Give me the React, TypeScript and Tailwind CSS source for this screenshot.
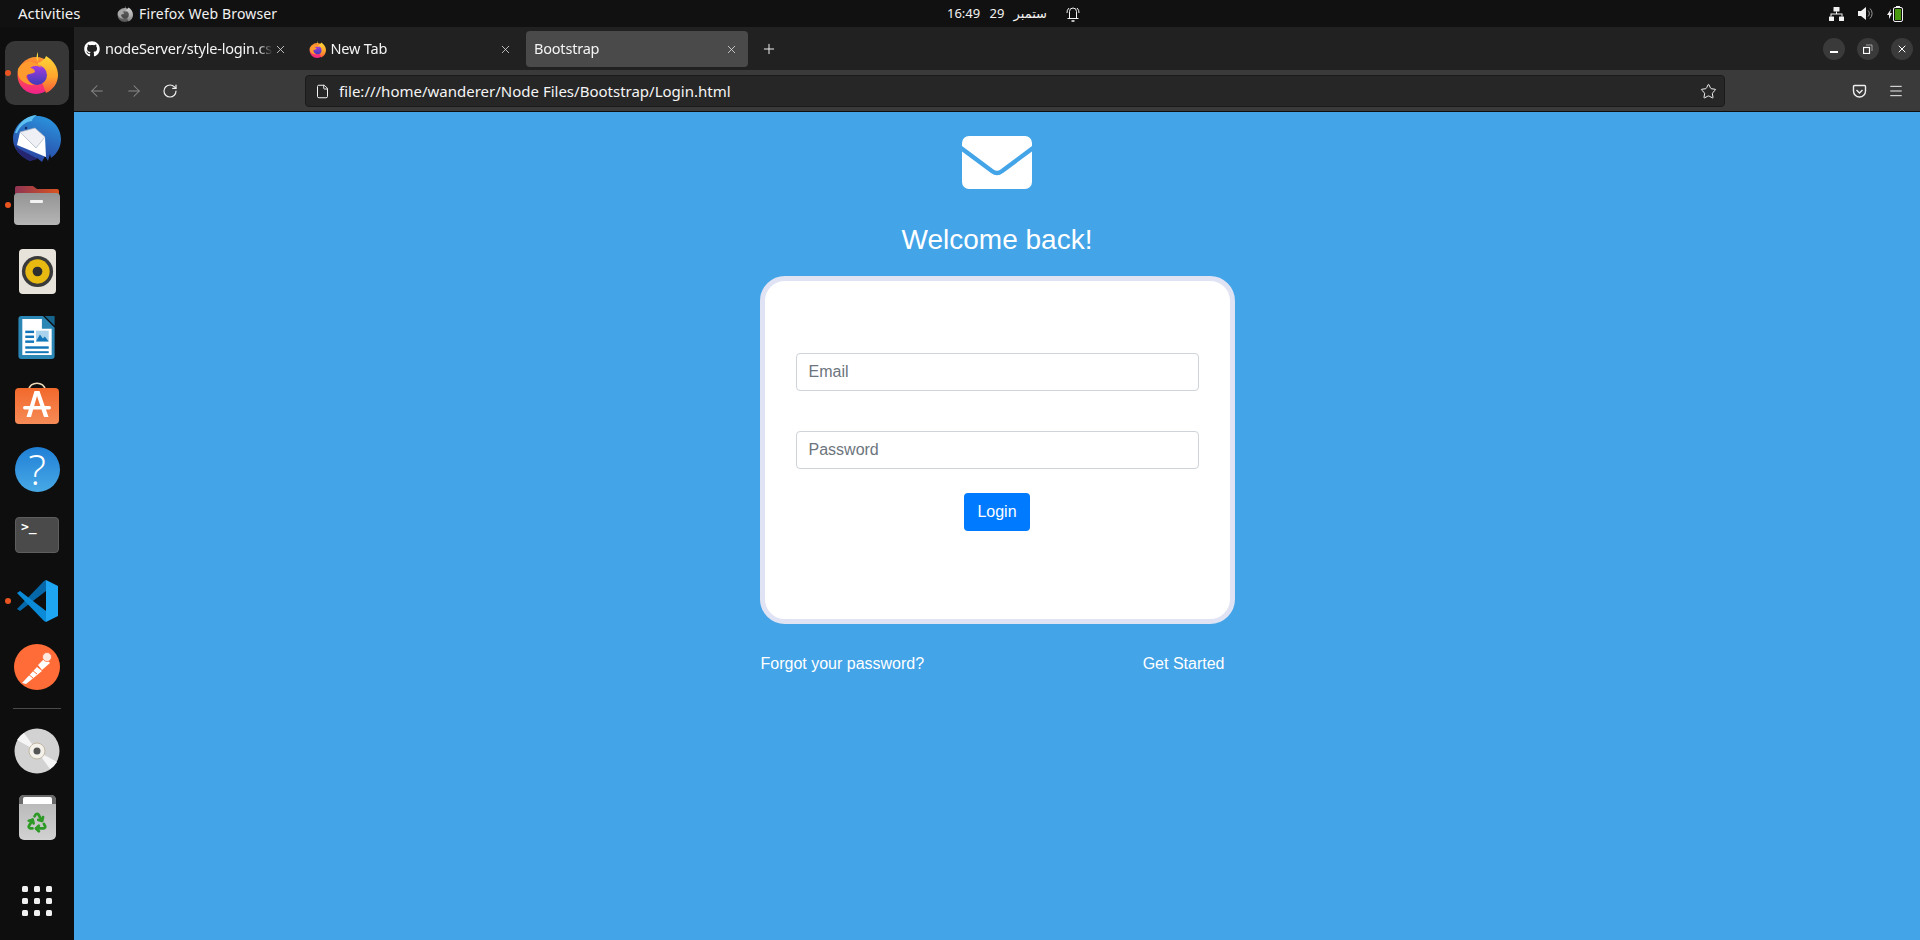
import { ArrowLeft, ArrowRight, RotateCw, File, Star, Menu, X, Plus, Recycle } from "lucide-react";
import { FaGithub } from "react-icons/fa";

const uiFont = "font-['Noto_Sans','DejaVu_Sans',sans-serif]";

function FirefoxIcon({ size = 42 }: { size?: number }) {
  return (
    <svg width={size} height={size} viewBox="0 0 42 42">
      <defs>
        <linearGradient id="ffOuter" x1="0.5" y1="0" x2="0.5" y2="1">
          <stop offset="0" stopColor="#ff9a2e" />
          <stop offset="0.55" stopColor="#ff4f4a" />
          <stop offset="1" stopColor="#f0208f" />
        </linearGradient>
        <linearGradient id="ffFlame" x1="0.5" y1="0" x2="0.5" y2="1">
          <stop offset="0" stopColor="#ffe03c" />
          <stop offset="0.6" stopColor="#ffa52c" />
          <stop offset="1" stopColor="#ff5a3c" />
        </linearGradient>
        <linearGradient id="ffGlobe" x1="0.5" y1="0" x2="0.5" y2="1">
          <stop offset="0" stopColor="#a83be0" />
          <stop offset="1" stopColor="#3d3bb8" />
        </linearGradient>
      </defs>
      <circle cx="20" cy="23.500" r="18.500" fill="url(#ffOuter)" />
      <path d="M22 0c-2 4-2 8 1 11 2-2 6-3 7-7 7 4 12 11 12 19 0 8-5 15-12 18l-8-22z" fill="url(#ffFlame)" />
      <circle cx="21" cy="23" r="10" fill="url(#ffGlobe)" />
      <path
        d="M2 17c3-6 9-8 14-7 5 1 8 3 10 6-5-3-10-2-12 0 3 0 5 2 5 4-5 3-8 1-9 5 2 4 4 6 8 8-9 0-18-6-16-16z"
        fill="#ff9a2e"
      />
    </svg>
  );
}

function ThunderbirdIcon() {
  return (
    <svg width="48" height="48" viewBox="0 0 48 48">
      <defs>
        <linearGradient id="tbBlue" x1="0.7" y1="0" x2="0.3" y2="1">
          <stop offset="0" stopColor="#2a93dd" />
          <stop offset="1" stopColor="#2a3f9e" />
        </linearGradient>
      </defs>
      <path
        d="M24 1c13 0 24 10 24 23 0 8-4 15-10 19l-1-4-2 7-3-5-3 6-5-4-7 3C8 42 0 34 0 24 0 11 11 1 24 1z"
        fill="url(#tbBlue)"
      />
      <path d="M2 18C6 6 16 0 24 0c-3 2-5 4-5 6-7 1-12 5-15 12z" fill="#5dc0f0" />
      <path d="M2 30c2 8 8 13 15 16l8-2-13-7C8 35 4 33 2 30z" fill="#25266f" />
      <path d="M7 17l25 5 1 20L4 30z" fill="#ffffff" />
      <path d="M7 17l15-4 10 9-9 11z" fill="#eef0f5" stroke="#a8b2c0" strokeWidth="0.7" />
      <circle cx="13" cy="13" r="1.200" fill="#1a2a5c" />
    </svg>
  );
}

function FilesIcon() {
  return (
    <svg width="46" height="40" viewBox="0 0 46 40">
      <defs>
        <linearGradient id="flTab" x1="0" y1="0" x2="1" y2="0">
          <stop offset="0" stopColor="#8f3454" />
          <stop offset="1" stopColor="#d9551f" />
        </linearGradient>
        <linearGradient id="flBody" x1="0" y1="0" x2="0" y2="1">
          <stop offset="0" stopColor="#949494" />
          <stop offset="1" stopColor="#b5b5b5" />
        </linearGradient>
      </defs>
      <path d="M1 3a2 2 0 0 1 2-2h16l4 3h20a2 2 0 0 1 2 2v10H1z" fill="url(#flTab)" />
      <rect x="0" y="8" width="46" height="32" rx="4" fill="url(#flBody)" />
      <rect x="16" y="15" width="13" height="3" rx="1" fill="#f2f2f2" />
    </svg>
  );
}

function RhythmboxIcon() {
  return (
    <svg width="37" height="45" viewBox="0 0 38 46">
      <rect width="38" height="46" rx="4" fill="#e7e3da" />
      <circle cx="19" cy="23" r="16" fill="#3a3a3a" />
      <circle cx="19" cy="23" r="12.500" fill="#e8b911" />
      <circle cx="19" cy="23" r="5" fill="#2e2e2e" />
    </svg>
  );
}

function WriterIcon() {
  return (
    <svg width="38" height="45" viewBox="0 0 38 46">
      <path d="M3 1h22l12 12v29a3 3 0 0 1-3 3H3a3 3 0 0 1-3-3V4a3 3 0 0 1 3-3z" fill="#2a86b5" />
      <path d="M4 4h20v10h10v27H4z" fill="#ffffff" />
      <path d="M27 1l10 0 0 10z" fill="#15658f" />
      <rect x="7" y="16" width="9" height="2.500" fill="#1276b8" />
      <rect x="7" y="21" width="9" height="2.500" fill="#1276b8" />
      <rect x="7" y="26" width="9" height="2.500" fill="#1276b8" />
      <rect x="7" y="32" width="24" height="2.500" fill="#1276b8" />
      <rect x="7" y="37" width="24" height="2" fill="#1276b8" />
      <path d="M18 16h13v11H18z" fill="#a9d3ec" />
      <path d="M18 27l4-7 3 4 2-2 4 5z" fill="#1276b8" />
    </svg>
  );
}

function SoftwareIcon() {
  return (
    <svg width="44" height="42" viewBox="0 0 44 42">
      <defs>
        <linearGradient id="swBag" x1="0" y1="0" x2="0" y2="1">
          <stop offset="0" stopColor="#f2692c" />
          <stop offset="1" stopColor="#f68b57" />
        </linearGradient>
      </defs>
      <path d="M14 8c0-9 16-9 16 0" fill="none" stroke="#ecd9b8" strokeWidth="1.600" />
      <rect x="0" y="6" width="44" height="36" rx="4" fill="url(#swBag)" />
      <path d="M19.500 9h5l9 26h-4.500L22 14l-6 21h-4.500z" fill="#ffffff" />
      <rect x="8" y="24" width="28" height="3.500" rx="1.700" fill="#ffffff" />
    </svg>
  );
}

function HelpIcon() {
  return (
    <div className="flex h-[45px] w-[45px] items-center justify-center rounded-full bg-gradient-to-b from-[#1f7fd6] to-[#48a9e6] font-['Open_Sans',sans-serif] text-[42px] font-light leading-none text-white">
      ?
    </div>
  );
}

function TerminalIcon() {
  return (
    <div className="h-[36px] w-[44px] rounded-[4px] border border-[#5e5e5e] bg-[#4a4a4a] pl-[5px] pt-[1px] font-['DejaVu_Sans_Mono',monospace] text-[13px] font-bold leading-[16px] text-white">
      {">_"}
    </div>
  );
}

function VSCodeIcon() {
  return (
    <svg width="42" height="42" viewBox="0 0 42 42">
      <path d="M1 29l3 2L30 11V0l-2 1z" fill="#0668a8" />
      <path d="M1 13l3-2 26 20v11l-2-1z" fill="#0b8ad8" />
      <path d="M30 0l12 6v30l-12 6z" fill="#1fa6f3" />
    </svg>
  );
}

function PostmanIcon() {
  return (
    <svg width="46" height="46" viewBox="0 0 46 46">
      <circle cx="23" cy="23" r="23" fill="#ff6c37" />
      <path d="M8 39l15-16 5 4-16 13z" fill="#ffffff" />
      <path d="M24 21l7-7 5 5-8 7z" fill="#ffffff" />
      <path d="M14 30l5 4M18 26l5 4" stroke="#ff6c37" strokeWidth="1" />
      <circle cx="33" cy="13" r="4.500" fill="#ffe9df" stroke="#ff6c37" strokeWidth="0.8" />
    </svg>
  );
}

function DiscIcon() {
  return (
    <svg width="46" height="46" viewBox="0 0 46 46">
      <circle cx="23" cy="23" r="22.500" fill="#d2d2d2" />
      <path d="M23 23L3 12a23 23 0 0 1 7-7z" fill="#f5f5f5" />
      <path d="M23 23l20 11a23 23 0 0 1-7 7z" fill="#f5f5f5" />
      <circle cx="23" cy="23" r="8" fill="#f4f1ea" stroke="#b9ab94" strokeWidth="0.8" />
      <circle cx="23" cy="23" r="3.500" fill="#555555" />
    </svg>
  );
}

function TrashIcon() {
  return (
    <div className="relative flex h-[45px] w-[37px] flex-col items-center overflow-hidden rounded-[5px] bg-gradient-to-b from-[#b4b4b4] to-[#d2d2d2]">
      <div className="h-[9px] w-full bg-[#6a6a6a] pl-[4px] pr-[1px] pt-[2px]">
        <div className="h-[7px] w-[29px] rounded-t-[2px] bg-white" />
      </div>
      <Recycle className="mt-[7px] h-[22px] w-[22px] text-[#2e9a26]" strokeWidth={3} />
    </div>
  );
}

function AppGrid() {
  return (
    <div className="grid grid-cols-3 gap-[6px]">
      {Array.from({ length: 9 }).map((_, i) => (
        <div key={i} className="h-[6px] w-[6px] rounded-[1.5px] bg-[#f0f0f0]" />
      ))}
    </div>
  );
}

function DockItem({ children, dot, active }: { children: React.ReactNode; dot?: boolean; active?: boolean }) {
  return (
    <div className="relative flex h-[66px] w-full items-center justify-center">
      {dot && <div className="absolute left-[5px] top-[30px] h-[6px] w-[6px] rounded-full bg-[#e95420]" />}
      {active ? (
        <div className="flex h-[64px] w-[64px] items-center justify-center rounded-[10px] bg-[#373737]">{children}</div>
      ) : (
        children
      )}
    </div>
  );
}

function Dock() {
  return (
    <aside className="flex w-[74px] shrink-0 flex-col items-center bg-[#0e0e0e] pt-[13px]">
      <DockItem dot active>
        <FirefoxIcon />
      </DockItem>
      <DockItem>
        <ThunderbirdIcon />
      </DockItem>
      <DockItem dot>
        <FilesIcon />
      </DockItem>
      <DockItem>
        <RhythmboxIcon />
      </DockItem>
      <DockItem>
        <WriterIcon />
      </DockItem>
      <DockItem>
        <SoftwareIcon />
      </DockItem>
      <DockItem>
        <HelpIcon />
      </DockItem>
      <DockItem>
        <TerminalIcon />
      </DockItem>
      <DockItem dot>
        <VSCodeIcon />
      </DockItem>
      <DockItem>
        <PostmanIcon />
      </DockItem>
      <div className="mt-[8px] h-px w-[48px] bg-[#4a4a4a]" />
      <div className="mt-[9px] flex w-full flex-col">
        <DockItem>
          <DiscIcon />
        </DockItem>
        <DockItem>
          <TrashIcon />
        </DockItem>
      </div>
      <div className="mt-auto pb-[24px]">
        <AppGrid />
      </div>
    </aside>
  );
}

function TopBar() {
  return (
    <header className={`flex h-[27px] shrink-0 items-center bg-[#111111] text-[14px] text-[#f2f2f2] ${uiFont}`}>
      <span className="ml-[18px] w-[63px] whitespace-nowrap text-[15px]">Activities</span>
      <div className="ml-[36px] grayscale">
        <FirefoxIcon size={16} />
      </div>
      <span className="ml-[6px] w-[137px] whitespace-nowrap tracking-[0.15px]">Firefox Web Browser</span>
      <div className="ml-[671px] flex w-[100px] items-center justify-between whitespace-nowrap text-[13px]">
        <span>16:49</span>
        <span>29</span>
        <span>ستمبر</span>
      </div>
      <svg className="ml-[19px]" width="14" height="17" viewBox="0 0 14 17" fill="none" stroke="#f2f2f2" strokeWidth="1">
        <path d="M3.500 13V6.500a3.500 3.500 0 0 1 7 0V13" />
        <path d="M1 8a6 6 0 0 1 2-5M13 8a6 6 0 0 0-2-5" />
        <path d="M1.500 13.500h11" />
        <path d="M5.500 16h3" strokeWidth="1.500" />
      </svg>
      <div className="ml-auto flex items-center gap-[14px] pr-[17px]">
        <svg width="15" height="14" viewBox="0 0 15 14" fill="#f2f2f2">
          <rect x="4.500" y="0" width="6" height="4.500" rx="0.500" />
          <rect x="0" y="9.500" width="5" height="4.500" rx="0.500" />
          <rect x="10" y="9.500" width="5" height="4.500" rx="0.500" />
          <path d="M7 4.500h1V6.500h5.500v3h-1v-2h-10v2h-1v-3H7z" />
        </svg>
        <svg width="15" height="15" viewBox="0 0 15 15">
          <path d="M0 5h3l5-4v13l-5-4H0z" fill="#f2f2f2" />
          <path d="M10 4.500a4 4 0 0 1 0 6" fill="none" stroke="#9a9a9a" strokeWidth="1" />
          <path d="M12 2.500a7 7 0 0 1 0 10" fill="none" stroke="#9a9a9a" strokeWidth="1" />
        </svg>
        <svg width="16" height="16" viewBox="0 0 16 16">
          <path d="M4 3L0 9h2v4l3-6H3z" fill="#f2f2f2" />
          <rect x="6.500" y="1.500" width="9" height="14" rx="1.500" fill="none" stroke="#f2f2f2" />
          <rect x="9" y="0" width="4" height="2" fill="#f2f2f2" />
          <rect x="8" y="3" width="6" height="11" fill="#4a9a10" />
        </svg>
      </div>
    </header>
  );
}

function Tab({ icon, label, active }: { icon?: React.ReactNode; label: string; active?: boolean }) {
  return (
    <div
      className={`flex h-[36px] w-[221.5px] shrink-0 items-center rounded-[4px] pl-[8px] pr-[10px] text-[14.5px] text-[#f4f4f4] ${
        active ? "bg-[#4a4a4a]" : ""
      }`}
    >
      {icon && <div className="mr-[5px] flex w-[17px] shrink-0 justify-center">{icon}</div>}
      <span className="flex-1 overflow-hidden whitespace-nowrap tracking-[-0.2px] [mask-image:linear-gradient(to_left,transparent,black_16px)]">
        {label}
      </span>
      <X className="ml-[1px] h-[13px] w-[13px] shrink-0 text-[#dddddd]" strokeWidth={1.5} />
    </div>
  );
}

function WindowButton({ children }: { children: React.ReactNode }) {
  return <div className="flex h-[22px] w-[22px] items-center justify-center rounded-full bg-[#3a3a3a] text-white">{children}</div>;
}

function BrowserChrome() {
  return (
    <div className={`shrink-0 ${uiFont}`}>
      <div className="flex h-[43px] items-start bg-[#212121] pl-[1px] pr-[7px] pt-[4px]">
        <div className="flex gap-[4px]">
          <Tab label="nodeServer/style-login.css" icon={<FaGithub className="h-[16px] w-[16px] text-white" />} />
          <Tab label="New Tab" icon={<FirefoxIcon size={17} />} />
          <Tab label="Bootstrap" active />
        </div>
        <Plus className="ml-[13px] mt-[10px] h-[16px] w-[16px] text-[#eeeeee]" strokeWidth={1.5} />
        <div className="ml-auto mt-[7px] flex gap-[12px]">
          <WindowButton>
            <div className="mt-[6px] h-[1.500px] w-[8px] bg-white" />
          </WindowButton>
          <WindowButton>
            <svg width="10" height="10" viewBox="0 0 10 10" fill="none" stroke="#ffffff">
              <rect x="0.500" y="3.500" width="6" height="6" strokeWidth="1.200" />
              <path d="M3 1h6v6" strokeWidth="0.800" stroke="#bbbbbb" />
            </svg>
          </WindowButton>
          <WindowButton>
            <X className="h-[12px] w-[12px]" strokeWidth={2} />
          </WindowButton>
        </div>
      </div>
      <div className="flex h-[42px] items-center border-b border-[#0e0e0e] bg-[#3a3a3a] pl-[14px] pr-[16px] pt-[1px]">
        <ArrowLeft className="h-[18px] w-[18px] text-[#8a8a8a]" strokeWidth={1.4} />
        <ArrowRight className="ml-[19px] h-[18px] w-[18px] text-[#8a8a8a]" strokeWidth={1.4} />
        <RotateCw className="ml-[19px] h-[16px] w-[16px] text-[#eeeeee]" strokeWidth={1.8} />
        <div className="ml-[127px] flex h-[32px] w-[1420px] items-center rounded-[4px] border border-[#1a1a1a] bg-[#262626] pl-[9px] pr-[7px] text-[15px] text-[#f4f4f4]">
          <File className="h-[15px] w-[15px]" strokeWidth={1.6} />
          <span className="ml-[9px] whitespace-nowrap">file:///home/wanderer/Node Files/Bootstrap/Login.html</span>
          <Star className="ml-auto h-[17px] w-[17px]" strokeWidth={1.4} />
        </div>
        <svg className="ml-[127px]" width="15" height="15" viewBox="0 0 15 15" fill="none" stroke="#eeeeee" strokeWidth="1.400">
          <path d="M1.500 2.500a1 1 0 0 1 1-1h10a1 1 0 0 1 1 1V7a6 6 0 0 1-12 0z" />
          <path d="M4.500 6l3 3 3-3" />
        </svg>
        <Menu className="ml-[21px] h-[16px] w-[16px] text-[#eeeeee]" strokeWidth={1.5} />
      </div>
    </div>
  );
}

function LoginPage() {
  return (
    <main className="flex flex-1 flex-col items-center bg-[#43a4e8] pt-[24px] font-['Liberation_Sans',Arial,sans-serif]">
      <svg width="70" height="53" viewBox="0 0 70 53" fill="#ffffff">
        <path d="M7 0h56a7 7 0 0 1 7 7v3L38.500 33.500a6 6 0 0 1-7 0L0 10V7a7 7 0 0 1 7-7z" />
        <path d="M0 15.500L29 37a10 10 0 0 0 12 0l29-21.500V46a7 7 0 0 1-7 7H7a7 7 0 0 1-7-7z" />
      </svg>
      <h1 className="mt-[34px] text-[28px] leading-[34px] text-white">Welcome back!</h1>
      <div className="mt-[19px] flex h-[348px] w-[475px] flex-col items-center rounded-[25px] border-[5px] border-[#e0e3f3] bg-white pt-[72px]">
        <input
          placeholder="Email"
          className="h-[38px] w-[403px] rounded-[4px] border border-[#ced4da] px-[12px] text-[16px] outline-none placeholder:text-[#6c757d]"
        />
        <input
          placeholder="Password"
          className="mt-[40px] h-[38px] w-[403px] rounded-[4px] border border-[#ced4da] px-[12px] text-[16px] outline-none placeholder:text-[#6c757d]"
        />
        <button className="mt-[24px] h-[38px] w-[66px] rounded-[4px] bg-[#007bff] text-[16px] text-white">Login</button>
      </div>
      <div className="mt-[28px] flex w-[475px] justify-between pl-[1px] pr-[10px] text-[16px] leading-[24px] text-white">
        <a href="#">Forgot your password?</a>
        <a href="#">Get Started</a>
      </div>
    </main>
  );
}

export default function App() {
  return (
    <div className="flex h-[940px] w-[1920px] flex-col overflow-hidden">
      <TopBar />
      <div className="flex flex-1">
        <Dock />
        <div className="flex flex-1 flex-col">
          <BrowserChrome />
          <LoginPage />
        </div>
      </div>
    </div>
  );
}
